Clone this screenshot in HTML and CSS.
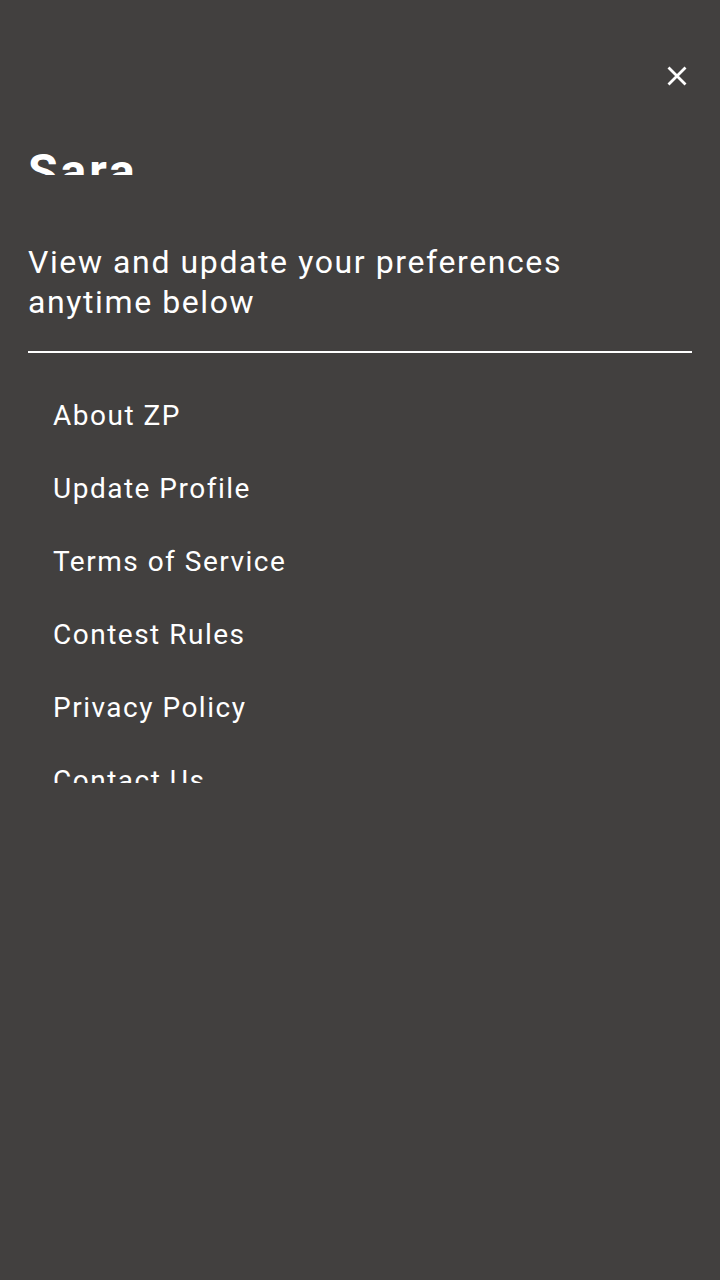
FILE: index.html
```html
<!DOCTYPE html>
<html lang="en">
<head>
<meta charset="utf-8">
<title>Menu</title>
<link rel="stylesheet" href="styles.css">
</head>
<body>
<div class="drawer">
  <div class="topbar">
    <button class="close" aria-label="Close">
      <svg width="22" height="20" viewBox="0 0 22 20"><path d="M2.5 1.5 L19.5 18.5 M19.5 1.5 L2.5 18.5" stroke="#fff" stroke-width="2.8" fill="none" stroke-linecap="butt"/></svg>
    </button>
  </div>
  <div class="name-wrap"><h1 class="name">Sara</h1></div>
  <p class="subtitle">View and update your preferences anytime below</p>
  <hr class="divider">
  <ul class="menu">
    <li>About ZP</li>
    <li>Update Profile</li>
    <li>Terms of Service</li>
    <li>Contest Rules</li>
    <li>Privacy Policy</li>
    <li>Contact Us</li>
  </ul>
</div>
</body>
</html>
```
FILE: styles.css
```css
html, body {
  margin: 0;
  padding: 0;
  background: #42403f;
}
body {
  width: 720px;
  height: 1280px;
  font-family: Roboto, "Noto Sans", sans-serif;
  color: #fff;
  overflow: hidden;
}
.drawer {
  padding: 0 28px;
}
.topbar {
  height: 144px;
  display: flex;
  justify-content: flex-end;
  align-items: flex-start;
}
.close {
  margin-top: 66px;
  margin-right: 4px;
  padding: 0;
  border: 0;
  background: none;
  width: 22px;
  height: 20px;
  display: block;
}
.close svg { display: block; }
.name-wrap {
  height: 31px;
  overflow: hidden;
}
.name {
  margin: 0;
  font-size: 48px;
  line-height: 56px;
  font-weight: 700;
  letter-spacing: 3px;
}
.subtitle {
  margin: 67px 0 0;
  font-size: 32px;
  line-height: 40px;
  font-weight: 400;
  letter-spacing: 1.6px;
  width: 600px;
}
.divider {
  margin: 29px 0 0;
  border: 0;
  height: 2px;
  background: #fff;
}
.menu {
  list-style: none;
  margin: 26px 0 0;
  padding: 0 0 0 25px;
  height: 404px;
  overflow: hidden;
}
.menu li {
  font-size: 28px;
  line-height: 73px;
  height: 73px;
  letter-spacing: 1.5px;
}
```
